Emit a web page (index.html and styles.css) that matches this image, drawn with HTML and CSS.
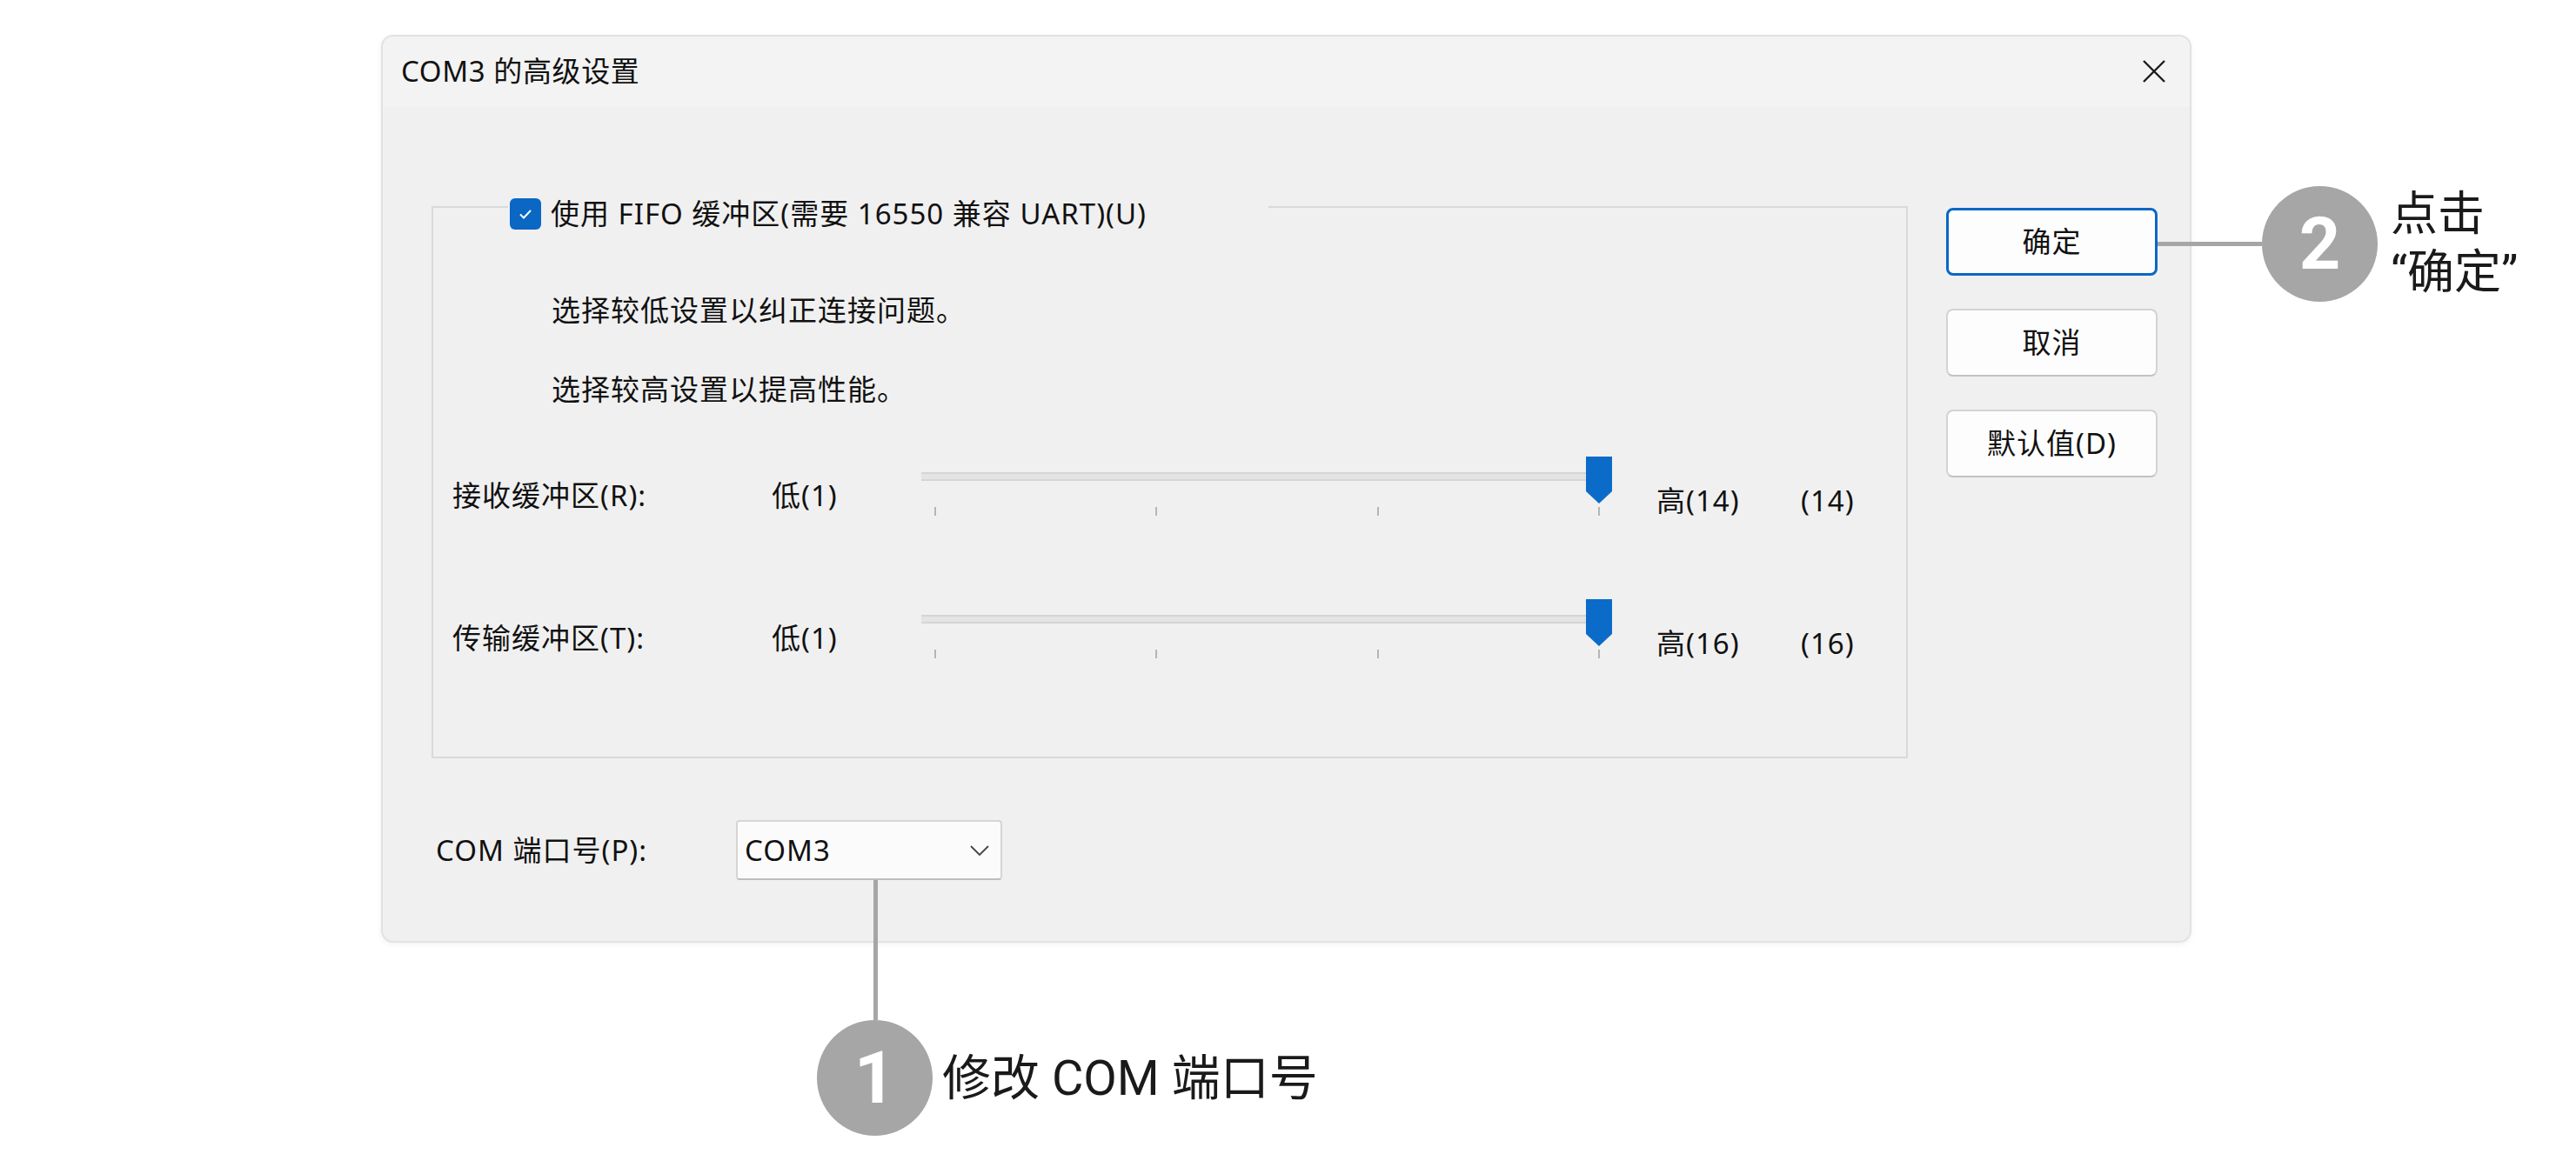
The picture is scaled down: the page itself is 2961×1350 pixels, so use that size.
FILE: index.html
```html
<!DOCTYPE html>
<html lang="zh-CN">
<head>
<meta charset="utf-8">
<title>COM3 的高级设置</title>
<link rel="stylesheet" href="styles.css">
</head>
<body>
<div class="stage">
  <div class="dialog">
    <div class="titlebar">
      <span class="title">COM3 的高级设置</span>
      <svg class="close" width="28" height="28" viewBox="0 0 28 28"><path d="M2 2 L26 26 M26 2 L2 26" stroke="#1b1b1b" stroke-width="2.4" fill="none"/></svg>
    </div>
    <div class="body">
      <div class="main">
        <div class="group">
          <div class="legend">
            <span class="checkbox"><svg width="20" height="20" viewBox="0 0 20 20"><path d="M4 10.5 L8 14.5 L16 6" stroke="#fff" stroke-width="2" fill="none"/></svg></span>
            <span class="legend-text">使用 FIFO 缓冲区(需要 16550 兼容 UART)(U)</span>
          </div>
          <p class="hint first">选择较低设置以纠正连接问题。</p>
          <p class="hint">选择较高设置以提高性能。</p>
          <div class="slider-row first">
            <span class="row-label">接收缓冲区(R):</span>
            <span class="row-low">低(1)</span>
            <div class="slider">
              <div class="rail"><div class="track"></div><span class="thumb"></span></div>
              <div class="ticks"><i></i><i></i><i></i><i></i></div>
            </div>
            <span class="row-high">高(14)</span>
            <span class="row-value">(14)</span>
          </div>
          <div class="slider-row">
            <span class="row-label">传输缓冲区(T):</span>
            <span class="row-low">低(1)</span>
            <div class="slider">
              <div class="rail"><div class="track"></div><span class="thumb"></span></div>
              <div class="ticks"><i></i><i></i><i></i><i></i></div>
            </div>
            <span class="row-high">高(16)</span>
            <span class="row-value">(16)</span>
          </div>
        </div>
        <div class="port-row">
          <span class="port-label">COM 端口号(P):</span>
          <div class="combo">
            <span>COM3</span>
            <svg width="24" height="14" viewBox="0 0 24 14"><path d="M2 2 L12 12 L22 2" stroke="#444" stroke-width="1.8" fill="none"/></svg>
          </div>
        </div>
      </div>
      <div class="buttons">
        <button class="btn primary">确定</button>
        <button class="btn">取消</button>
        <button class="btn">默认值(D)</button>
      </div>
    </div>
  </div>

  <div class="callout c1">
    <span class="stem"></span>
    <div class="callout-row">
      <span class="badge">1</span>
      <span class="callout-text">修改 COM 端口号</span>
    </div>
  </div>

  <div class="callout c2">
    <span class="arm"></span>
    <span class="badge">2</span>
    <span class="callout-text two">点击<br>“确定”</span>
  </div>
</div>
</body>
</html>
```
FILE: styles.css
```css
* { box-sizing: border-box; }

html, body {
  margin: 0;
  padding: 0;
  background: #ffffff;
}

.stage {
  position: relative;
  width: 2961px;
  height: 1350px;
  padding: 40px 0 0 438px;
  font-family: "Noto Sans", "Noto Sans CJK SC", "Microsoft YaHei", sans-serif;
  color: #111;
}

/* dialog window */
.dialog {
  width: 2081px;
  height: 1044px;
  background: #f0f0f0;
  border: 2px solid #e2e2e2;
  border-radius: 14px;
  box-shadow: 0 2px 6px rgba(0, 0, 0, 0.06);
  overflow: hidden;
  display: flex;
  flex-direction: column;
}

.titlebar {
  height: 81px;
  background: #f3f3f3;
  display: flex;
  align-items: center;
  justify-content: space-between;
  padding: 0 27px 2px 21px;
}

.title {
  font-size: 33px;
  line-height: 40px;
  letter-spacing: 0.6px;
  white-space: nowrap;
}

.close { display: block; }

.body {
  display: flex;
  padding: 114px 37px 0 56px;
  gap: 44px;
}

.main {
  flex: 1;
  display: flex;
  flex-direction: column;
}

/* group box */
.group {
  border: 2px solid #d9d9d9;
  height: 635px;
  display: flex;
  flex-direction: column;
}

.legend {
  align-self: flex-start;
  display: flex;
  align-items: center;
  gap: 11px;
  height: 36px;
  margin: -11px 0 0 86px;
  padding: 0 140px 0 2px;
  background: #f0f0f0;
}

.checkbox {
  width: 36px;
  height: 36px;
  border-radius: 6px;
  background: #0a67c4;
  display: flex;
  align-items: center;
  justify-content: center;
}

.legend-text,
.hint,
.row-label,
.row-low,
.row-high,
.row-value,
.port-label,
.combo span,
.btn {
  font-size: 33px;
  line-height: 40px;
  letter-spacing: 1px;
}

.legend-text { white-space: nowrap; }

.hint {
  margin: 51px 0 0 136px;
}

.hint.first { margin-top: 73px; }

/* slider rows */
.slider-row {
  display: grid;
  grid-template-columns: 367px 172px 796px 215px auto;
  height: 68px;
  margin-top: 96px;
  padding-left: 22px;
}

.slider-row.first { margin-top: 57px; }

.row-label,
.row-low { padding-top: 25px; white-space: nowrap; }

.row-high { padding: 31px 0 0 49px; white-space: nowrap; }
.row-value { padding-top: 31px; }

.slider {
  display: flex;
  flex-direction: column;
}

.rail {
  position: relative;
  height: 58px;
}

.track {
  margin-top: 18px;
  height: 10px;
  width: 780px;
  background: #e4e4e4;
  border-top: 2px solid #d5d5d5;
  border-bottom: 2px solid #d5d5d5;
}

.thumb {
  position: absolute;
  right: 2px;
  top: 0;
  width: 30px;
  height: 54px;
  background: #0a6cc8;
  clip-path: polygon(0 0, 100% 0, 100% 74%, 50% 100%, 0 74%);
}

.ticks {
  display: flex;
  justify-content: space-between;
  padding: 0 16px 0 15px;
}

.ticks i {
  display: block;
  width: 2px;
  height: 10px;
  background: #b5b5b5;
}

/* port selector */
.port-row {
  display: flex;
  align-items: center;
  margin-top: 71px;
}

.port-label {
  width: 350px;
  padding-left: 5px;
  white-space: nowrap;
}

.combo {
  width: 306px;
  height: 69px;
  background: #fbfbfb;
  border: 2px solid #d6d6d6;
  border-bottom-color: #bdbdbd;
  border-radius: 4px;
  display: flex;
  align-items: center;
  justify-content: space-between;
  padding: 0 12px 0 8px;
}

.combo svg { display: block; }

/* command buttons */
.buttons {
  width: 243px;
  display: flex;
  flex-direction: column;
  gap: 38px;
  padding-top: 2px;
}

.btn {
  height: 78px;
  width: 243px;
  background: #fdfdfd;
  border: 2px solid #d3d3d3;
  border-bottom-color: #c2c2c2;
  border-radius: 8px;
  font-family: inherit;
  color: #111;
  padding: 0;
}

.btn.primary {
  border: 3px solid #0a67c4;
}

/* annotations */
.callout {
  position: absolute;
  font-family: Roboto, "Noto Sans CJK SC", sans-serif;
  color: #1a1a1a;
}

.badge {
  width: 133px;
  height: 133px;
  border-radius: 50%;
  background: #a6a6a6;
  color: #fff;
  font-family: Roboto, sans-serif;
  font-weight: 700;
  font-size: 83px;
  display: flex;
  align-items: center;
  justify-content: center;
  flex: none;
}

.c1 {
  left: 939px;
  top: 1012px;
  display: flex;
  flex-direction: column;
}

.stem {
  width: 5px;
  height: 161px;
  background: #a6a6a6;
  margin-left: 65px;
}

.callout-row {
  display: flex;
  align-items: center;
  gap: 11px;
}

.callout-text {
  font-size: 56px;
  line-height: 70px;
  white-space: nowrap;
}

.c2 {
  left: 2480px;
  top: 213px;
  display: flex;
  align-items: center;
}

.arm {
  width: 120px;
  height: 5px;
  background: #a6a6a6;
}

.callout-text.two {
  font-size: 54px;
  line-height: 67px;
  margin-left: 15px;
}
```
